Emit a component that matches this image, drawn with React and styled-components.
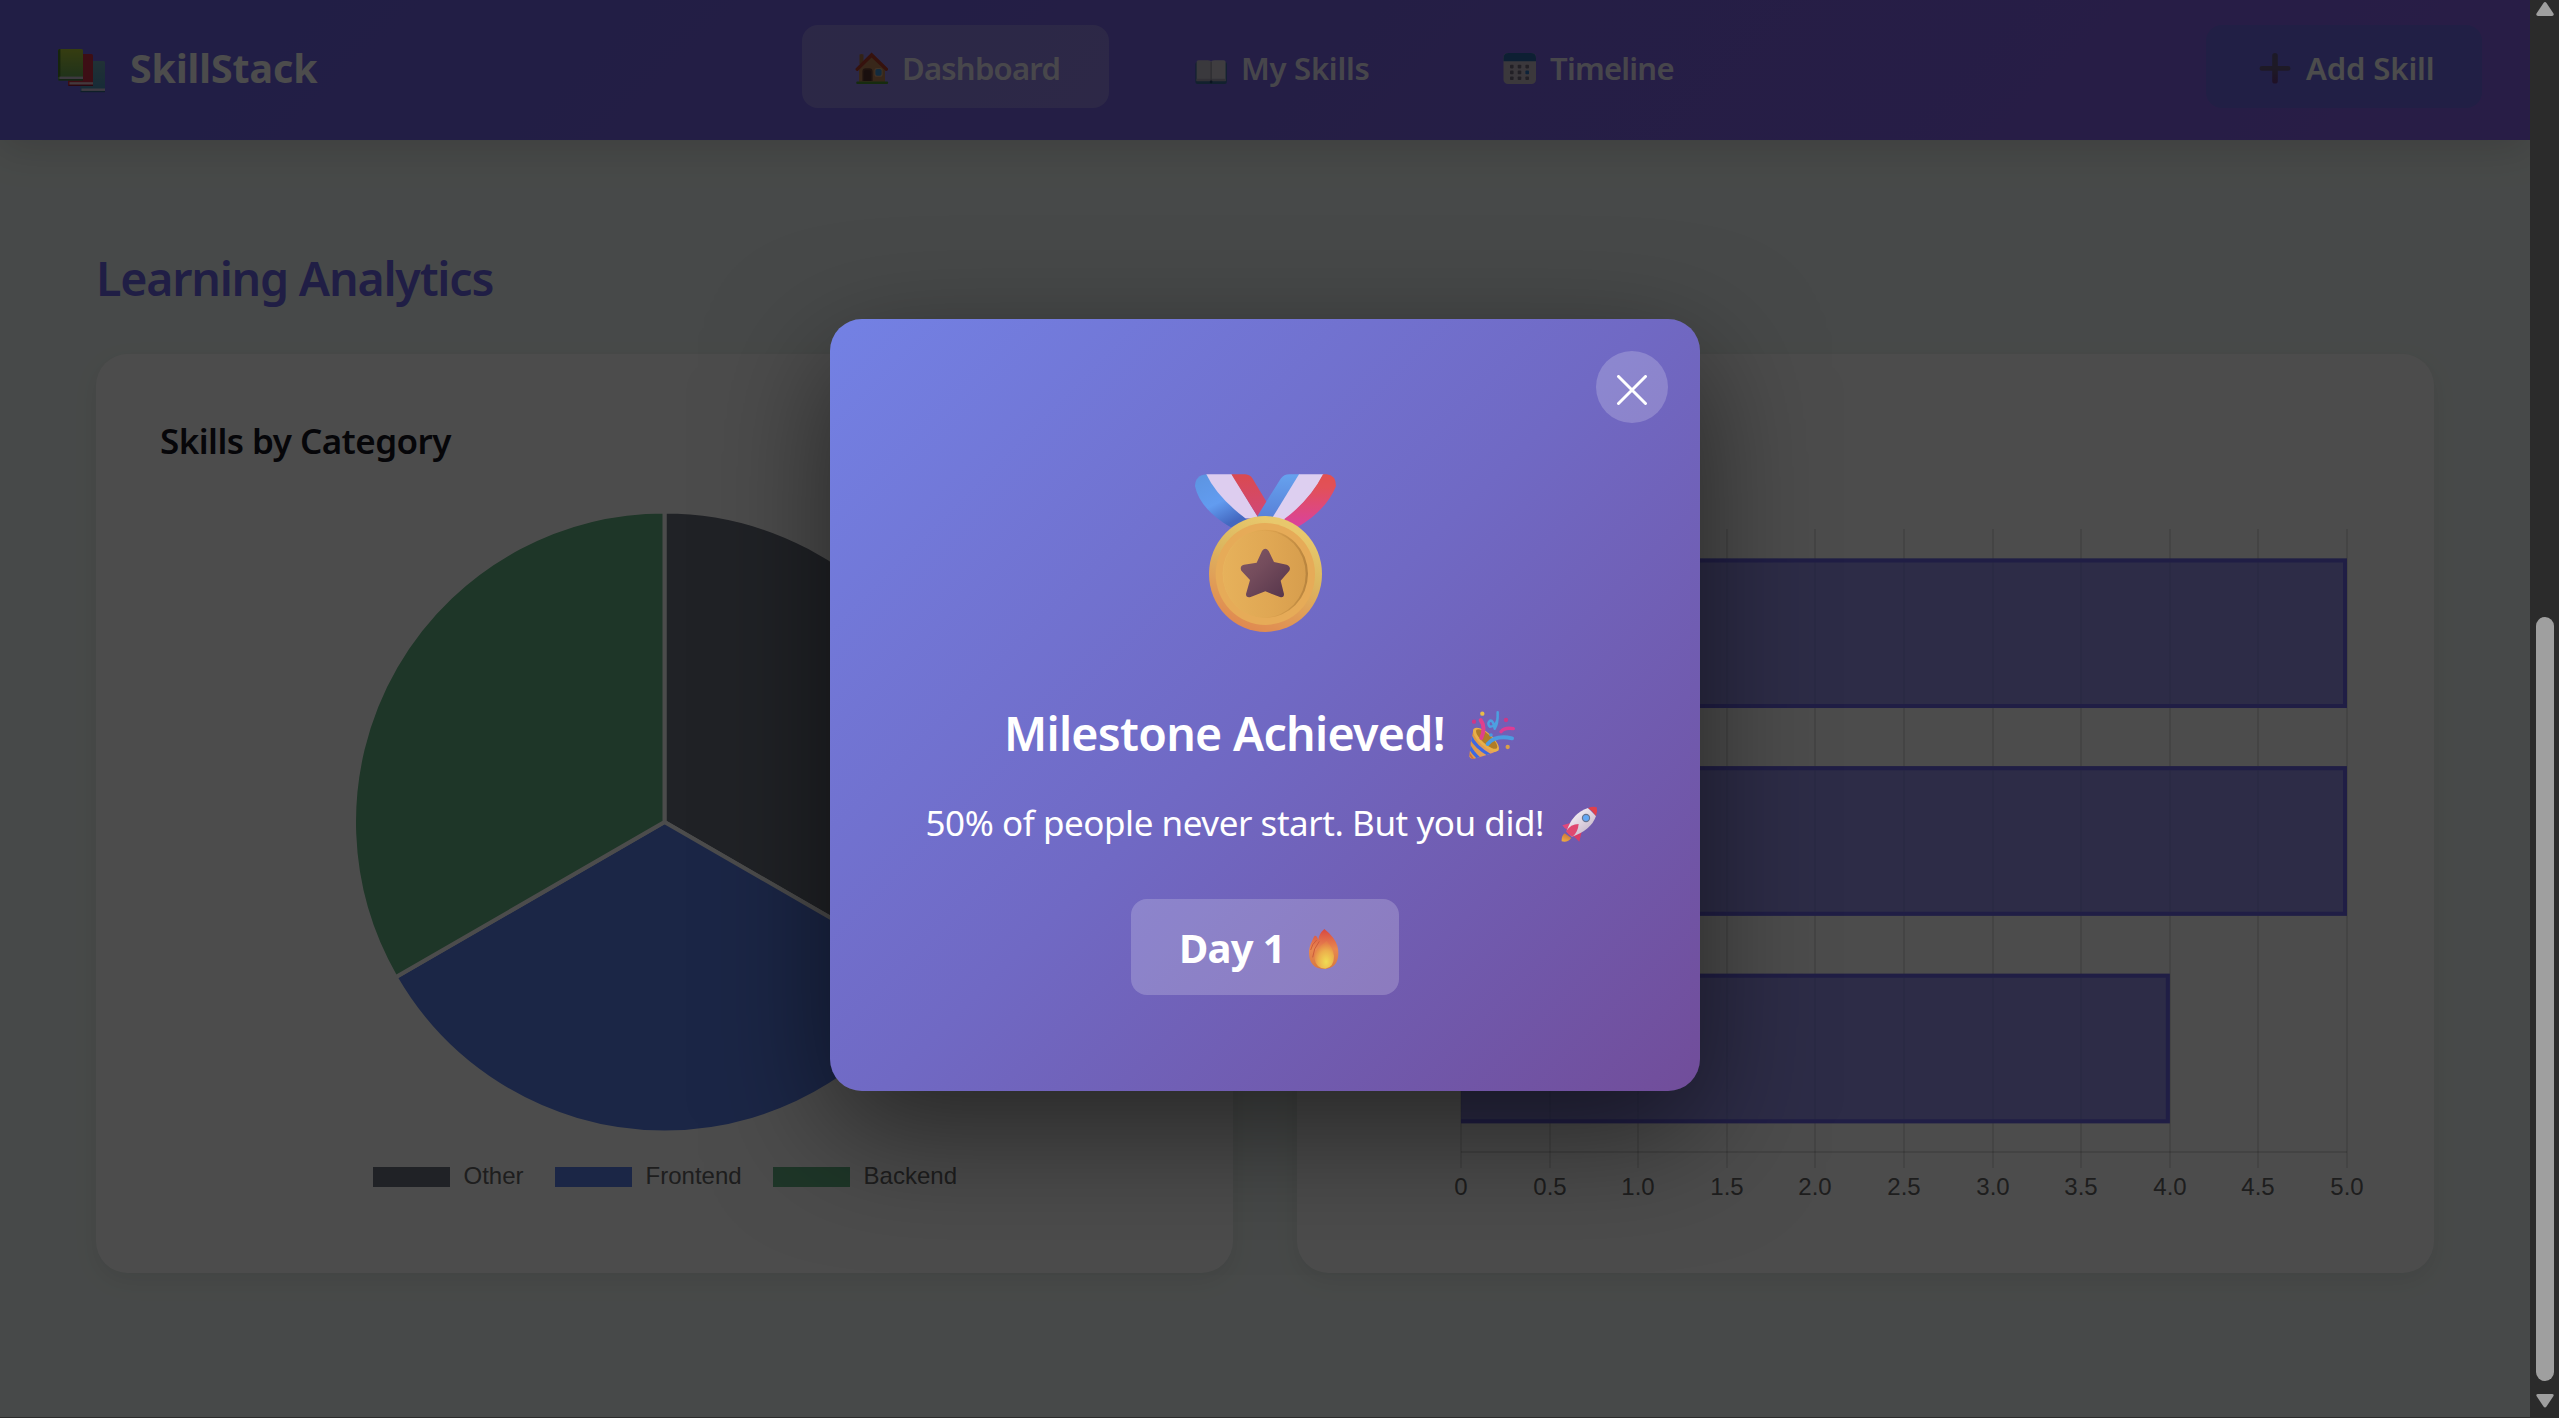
import React from 'react';
import styled, { createGlobalStyle } from 'styled-components';

const GlobalStyle = createGlobalStyle`
  * { box-sizing: border-box; }
  body {
    margin: 0;
    overflow: hidden;
    background: #2b2b2b;
    font-family: "Noto Sans", "Open Sans", sans-serif;
  }
  svg { display: block; flex-shrink: 0; }
`;

const Screen = styled.div`
  display: flex;
  width: 2559px;
  height: 1418px;
  background: #2b2b2b;
`;

const Page = styled.div`
  position: relative;
  width: 2530px;
  height: 1417px;
  overflow: hidden;
  background: #eff6f3;
`;

const Header = styled.header`
  position: relative;
  display: flex;
  justify-content: space-between;
  align-items: center;
  height: 140px;
  padding: 25px 48px 32px 56px;
  background: linear-gradient(135deg, #6e67e6 0%, #8762ea 100%);
  box-shadow: 0 8px 40px rgba(0, 0, 0, 0.15);
`;

const Brand = styled.div`
  display: flex;
  align-items: center;
  gap: 22px;
  width: 265px;
`;

const BrandName = styled.span`
  padding-top: 2px;
  font-size: 39.2px;
  font-weight: 700;
  line-height: 48px;
  color: #fff;
`;

const BrandIcon = styled.svg`
  margin-top: 8px;
`;

const Nav = styled.nav`
  display: flex;
  gap: 32px;
`;

const NavItem = styled.a`
  display: flex;
  align-items: center;
  gap: ${(p) => p.$gap || 11}px;
  width: ${(p) => p.$width}px;
  height: 83px;
  padding-left: 51px;
  border-radius: 16px;
  background: ${(p) => (p.$active ? 'rgba(255, 255, 255, 0.22)' : 'transparent')};
  color: rgba(255, 255, 255, 0.9);
`;

const NavLabel = styled.span`
  padding-top: 3px;
  font-size: 31px;
  font-weight: 600;
  line-height: 42px;
  letter-spacing: ${(p) => p.$tracking || 0}px;
  white-space: nowrap;
`;

const ItemIcon = styled.svg`
  width: 38px;
  height: 38px;
  margin-top: 5px;
`;

const AddButton = styled.button`
  display: flex;
  align-items: center;
  gap: 11px;
  width: 276px;
  height: 83px;
  padding: 0 0 0 51px;
  border: 0;
  border-radius: 16px;
  background: #6e6ae6;
  color: #fff;
  font-family: inherit;
`;

const Main = styled.main`
  display: flex;
  flex-direction: column;
  padding: 106px 96px 0;
`;

const SectionTitle = styled.h2`
  margin: 0 0 44px;
  font-size: 46.5px;
  font-weight: 600;
  line-height: 64px;
  letter-spacing: -1.2px;
  color: #6c65e6;
`;

const Cards = styled.div`
  display: grid;
  grid-template-columns: 1fr 1fr;
  gap: 64px;
`;

const Card = styled.section`
  display: flex;
  flex-direction: column;
  height: 919px;
  padding: 63px 64px 0;
  border-radius: 32px;
  background: #fff;
  box-shadow: 0 8px 24px rgba(0, 0, 0, 0.08);
`;

const CardTitle = styled.h3`
  height: 48px;
  margin: 0 0 25px;
  font-size: 35px;
  font-weight: 600;
  line-height: 48px;
  letter-spacing: -0.55px;
  color: #14141e;
`;

const Legend = styled.div`
  display: flex;
  justify-content: center;
  gap: 31.5px;
  margin-top: 13px;
  padding-left: 1px;
`;

const LegendItem = styled.div`
  display: flex;
  align-items: center;
  gap: 14px;
`;

const Swatch = styled.span`
  width: 76.5px;
  height: 20px;
  background: ${(p) => p.$color};
`;

const LegendLabel = styled.span`
  padding-bottom: 3px;
  font-family: "Liberation Sans", Arial, sans-serif;
  font-size: 24px;
  line-height: 25px;
  color: #666;
`;

const TickText = styled.text`
  font-family: "Liberation Sans", Arial, sans-serif;
  font-size: 24px;
  fill: #666;
  text-anchor: middle;
`;

const Overlay = styled.div`
  position: absolute;
  inset: 0;
  display: flex;
  justify-content: center;
  align-items: flex-start;
  padding-top: 319px;
  background: rgba(0, 0, 0, 0.7);
`;

const Modal = styled.div`
  position: relative;
  display: flex;
  flex-direction: column;
  align-items: center;
  width: 870px;
  height: 772px;
  padding-top: 131px;
  border-radius: 32px;
  background: linear-gradient(135deg, #7381e4 0%, #7069c4 50%, #714d9a 100%);
  box-shadow: 0 40px 120px rgba(0, 0, 0, 0.5);
  color: #fff;
`;

const CloseButton = styled.button`
  position: absolute;
  top: 32px;
  right: 32px;
  display: flex;
  justify-content: center;
  align-items: center;
  width: 72px;
  height: 72px;
  padding: 5px 0 0;
  border: 0;
  border-radius: 50%;
  background: rgba(255, 255, 255, 0.2);
`;

const ModalTitle = styled.h2`
  display: flex;
  justify-content: space-between;
  align-items: center;
  width: 522px;
  height: 64px;
  margin: 51px 0 0;
  font-size: 46.5px;
  font-weight: 600;
  line-height: 64px;
  letter-spacing: -0.72px;
  white-space: nowrap;
`;

const ModalText = styled.p`
  display: flex;
  justify-content: space-between;
  align-items: center;
  width: 679px;
  height: 48px;
  margin: 34px 0 0;
  font-size: 35px;
  line-height: 48px;
  letter-spacing: -0.45px;
  white-space: nowrap;
`;

const DayBadge = styled.div`
  display: flex;
  justify-content: space-between;
  align-items: center;
  width: 268px;
  height: 96px;
  margin-top: 52px;
  padding: 0 54px 0 48px;
  border-radius: 16px;
  background: rgba(255, 255, 255, 0.2);
  font-size: 40px;
  font-weight: 700;
  letter-spacing: -0.7px;
`;

const InlineEmoji = styled.svg`
  margin-top: 3px;
`;

const ScrollTrack = styled.div`
  display: flex;
  flex-direction: column;
  align-items: center;
  width: 29px;
  padding-left: 1px;
  background: #2b2b2b;
`;

const ScrollThumb = styled.div`
  width: 18px;
  height: 764px;
  margin: 601px 0 12px;
  border-radius: 9px;
  background: #9f9f9f;
`;

function BooksIcon() {
  return (
    <BrandIcon width="52" height="48" viewBox="56 47 52 48">
      <defs>
        <linearGradient id="bkG" x1="0" y1="0" x2="0" y2="1">
          <stop offset="0" stopColor="#b4cc38" />
          <stop offset="1" stopColor="#62a45c" />
        </linearGradient>
        <linearGradient id="bkB" x1="0" y1="0" x2="0" y2="1">
          <stop offset="0" stopColor="#6ea4b4" />
          <stop offset="1" stopColor="#4a90b8" />
        </linearGradient>
      </defs>
      <rect x="80.5" y="61" width="24.5" height="31" rx="1.5" fill="url(#bkB)" />
      <rect x="81.5" y="88.5" width="23.5" height="2.4" fill="#d4c4dc" />
      <rect x="80.5" y="91" width="24.5" height="1.2" fill="#35658a" />
      <rect x="68" y="54" width="25" height="32" rx="1.5" fill="#cc3048" />
      <rect x="69.5" y="82.2" width="23.5" height="2.4" fill="#e0c0cc" />
      <rect x="68.5" y="84.8" width="24.5" height="1.2" fill="#8c1c38" />
      <rect x="58" y="49" width="25" height="31.5" rx="1.5" fill="url(#bkG)" />
      <path d="M58 51a2 2 0 0 1 2.4-2V77H58z" fill="#4c7c28" />
      <rect x="59.5" y="76.6" width="23.5" height="2.4" fill="#ccc0d4" />
      <rect x="58.5" y="79.2" width="24.5" height="1.3" fill="#3c6c44" />
    </BrandIcon>
  );
}

function HouseIcon() {
  return (
    <ItemIcon viewBox="0 0 38 38">
      <path d="M6.5 4.6q2-1.2 4 0V14h-4z" fill="#a8744c" />
      <path d="M6 17 18.6 5 32 17v15H6z" fill="#bc8458" />
      <path d="M18.6 2.6 2.6 18.6q-.6 2.6 2.2 2.4L18.6 7.4 32.8 21q2.6.2 2.2-2.4z" fill="#b43c2c" />
      <path d="M9.4 31V21.5q0-3.2 3.4-3.2h3.4q3.4 0 3.4 3.2V31z" fill="#6b4438" />
      <path d="M10.8 31V22q0-2 2-2H15q3 0 3 2v9z" fill="#553430" />
      <rect x="21.4" y="18" width="8.2" height="8.8" rx="2.6" fill="#d8a880" />
      <rect x="22.4" y="19" width="6.2" height="6.8" rx="1.8" fill="#3f8fd0" />
      <rect x="3.2" y="31.6" width="32" height="2.4" rx="1.2" fill="#4b8f34" />
    </ItemIcon>
  );
}

function BookIcon() {
  return (
    <ItemIcon viewBox="0 0 38 38">
      <path d="M3.4 14q0-2 2-2h27.4q2 0 2 2v18q0 2-2 2H5.4q-2 0-2-2z" fill="#3c6f9c" />
      <path d="M4.6 12q0-1.8 2-1.8h9q3.5 0 3.5 2V31H4.6z" fill="#c4c0cc" />
      <path d="M33.6 12q0-1.8-2-1.8h-9q-3.5 0-3.5 2V31h14.5z" fill="#d2ced8" />
      <path d="M4.6 28.8h14.5v2.4H4.6zM19.1 28.8h14.5v2.4H19.1z" fill="#a8a0b4" />
      <path d="M19.1 12v19" stroke="#8c8898" strokeWidth="1" />
      <circle cx="19.1" cy="32" r="1.4" fill="#24446c" />
    </ItemIcon>
  );
}

const calendarRows = [14.8, 20.6, 26.4];
const calendarColumns = [7, 14.7, 22.4];

function CalendarIcon() {
  return (
    <ItemIcon viewBox="0 0 38 38">
      <rect x="0.5" y="3" width="32.5" height="31" rx="4.5" fill="#c6bcc8" />
      <path d="M0.5 11.2V8q0-5 5-5H28q5 0 5 5v3.2z" fill="#2c6aac" />
      {calendarRows.map((y, r) =>
        calendarColumns.map((x, c) => (
          <rect
            key={`${x}-${y}`}
            x={x}
            y={y}
            width="3.6"
            height="3.6"
            rx="0.8"
            fill={r === 1 && c === 2 ? '#2c74c0' : '#746c80'}
          />
        ))
      )}
    </ItemIcon>
  );
}

function PlusIcon() {
  return (
    <ItemIcon viewBox="0 0 38 38">
      <defs>
        <linearGradient id="plusFill" x1="0" y1="0" x2="0" y2="1">
          <stop offset="0" stopColor="#605684" />
          <stop offset="0.5" stopColor="#665880" />
          <stop offset="1" stopColor="#683882" />
        </linearGradient>
      </defs>
      <path
        d="M18 3q2.800 0 2.800 2.600V16H31q2.500 0 2.500 2.400t-2.500 2.400H20.800V31q0 2.600-2.800 2.600T15.200 31V20.800H5q-2.500 0-2.500-2.400T5 16h10.200V5.600Q15.200 3 18 3z"
        fill="url(#plusFill)"
      />
    </ItemIcon>
  );
}

function MedalIcon() {
  return (
    <svg width="170" height="200" viewBox="0 0 510 600">
      <defs>
        <linearGradient id="mdRim" x1="0.7" y1="0.1" x2="0.35" y2="1">
          <stop offset="0" stopColor="#e8c86c" />
          <stop offset="0.35" stopColor="#dcb860" />
          <stop offset="0.65" stopColor="#e0a058" />
          <stop offset="1" stopColor="#e08850" />
        </linearGradient>
        <linearGradient id="mdInner" x1="0" y1="0" x2="1" y2="0">
          <stop offset="0" stopColor="#e8b860" />
          <stop offset="0.55" stopColor="#dca24e" />
          <stop offset="1" stopColor="#b8843e" />
        </linearGradient>
        <linearGradient id="mdPlate" x1="0" y1="0" x2="1" y2="0">
          <stop offset="0" stopColor="#e6b05a" />
          <stop offset="1" stopColor="#dca250" />
        </linearGradient>
        <linearGradient id="mdBlue" x1="0" y1="0" x2="0.5" y2="1">
          <stop offset="0" stopColor="#5c94e0" />
          <stop offset="0.6" stopColor="#629cf0" />
          <stop offset="1" stopColor="#4468c0" />
        </linearGradient>
        <linearGradient id="mdBlue2" x1="0" y1="0" x2="0" y2="1">
          <stop offset="0" stopColor="#66a2ee" />
          <stop offset="1" stopColor="#5880d8" />
        </linearGradient>
        <linearGradient id="mdPink" x1="0" y1="0" x2="0" y2="1">
          <stop offset="0" stopColor="#e25050" />
          <stop offset="0.25" stopColor="#e25058" />
          <stop offset="1" stopColor="#da429e" />
        </linearGradient>
        <linearGradient id="mdRed" x1="0" y1="0" x2="0" y2="1">
          <stop offset="0" stopColor="#da4a50" />
          <stop offset="1" stopColor="#d04878" />
        </linearGradient>
        <linearGradient id="mdStar" x1="0" y1="0" x2="1" y2="1">
          <stop offset="0" stopColor="#805864" />
          <stop offset="0.4" stopColor="#744c5c" />
          <stop offset="1" stopColor="#54344a" />
        </linearGradient>
      </defs>
      <path d="M80 73Q46 76 45 108Q58 176 152 232L205 215Z" fill="url(#mdBlue)" />
      <path d="M79 73H156L236 205H196Q110 140 79 73z" fill="#ddcdef" />
      <path d="M154 73H196Q210 74 218 86L262 160L236 205Z" fill="url(#mdRed)" />
      <path d="M302 86Q312 73 328 73H360L278 205H230Q234 194 242 182Z" fill="url(#mdBlue2)" />
      <path d="M357 73H431Q390 150 314 210L276 205Z" fill="#ddcff0" />
      <path d="M429 73H440Q468 76 468 108Q440 180 352 232L312 208Q390 150 429 73z" fill="url(#mdPink)" />
      <ellipse cx="256.5" cy="372" rx="169.5" ry="174" fill="url(#mdRim)" />
      <ellipse cx="256" cy="372" rx="149" ry="153" fill="#e6ab58" />
      <ellipse cx="256" cy="371.5" rx="128" ry="132" fill="url(#mdInner)" />
      <ellipse cx="253" cy="372.5" rx="124" ry="130" fill="url(#mdPlate)" opacity="0.85" />
      <path
        d="M246 303Q256 290 266 303L282 336L320 344Q334 350 328 362L302 392L312 432Q312 444 300 441L256 424L212 441Q198 444 198 432L210 390L184 362Q178 348 192 344L230 338Z"
        fill="url(#mdStar)"
      />
    </svg>
  );
}

function PartyIcon() {
  return (
    <InlineEmoji width="60" height="56" viewBox="78 33 180 168">
      <defs>
        <linearGradient id="ptCone" x1="0" y1="0" x2="1" y2="0.6">
          <stop offset="0" stopColor="#d8943c" />
          <stop offset="1" stopColor="#e8a060" />
        </linearGradient>
        <clipPath id="ptClip">
          <path d="M101 98Q90 140 88 182Q92 190 102 188Q144 178 176 163Z" />
        </clipPath>
      </defs>
      <path d="M101 98Q90 140 88 182Q92 190 102 188Q144 178 176 163Z" fill="url(#ptCone)" />
      <g clipPath="url(#ptClip)" stroke="#3f68e0" strokeWidth="10" fill="none">
        <path d="M90 118Q104 152 150 178" />
        <path d="M84 142Q94 168 122 192" />
        <path d="M84 168L102 192" stroke="#d06c3c" strokeWidth="5" />
      </g>
      <ellipse cx="138" cy="131" rx="49" ry="20" transform="rotate(42 138 131)" fill="#e8b048" />
      <ellipse cx="140" cy="129" rx="41" ry="14" transform="rotate(42 140 129)" fill="#b07c28" />
      <path d="M122 72Q138 94 124 126" stroke="#e0408c" strokeWidth="12" strokeLinecap="round" fill="none" />
      <path d="M143 144Q166 116 216 127" stroke="#4c9ce0" strokeWidth="12" strokeLinecap="round" fill="none" />
      <path d="M183 107Q194 93 220 98" stroke="#dc3c94" strokeWidth="10" strokeLinecap="round" fill="none" />
      <path
        d="M173 49Q174 84 164 98Q160 72 150 74Q140 84 150 92Q166 92 172 72"
        stroke="#4ca0e0"
        strokeWidth="7.5"
        strokeLinecap="round"
        strokeLinejoin="round"
        fill="none"
      />
      <circle cx="127" cy="53" r="6.5" fill="#e8bc48" />
      <circle cx="102" cy="77" r="6.5" fill="#cc3888" />
      <circle cx="198" cy="72" r="6.5" fill="#cc3888" />
      <circle cx="153" cy="117" r="5.5" fill="#4898e0" />
      <circle cx="203" cy="153" r="6.5" fill="#dca048" />
    </InlineEmoji>
  );
}

function RocketIcon() {
  return (
    <InlineEmoji width="48" height="48" viewBox="351 315 144 144">
      <defs>
        <linearGradient id="rkBody" x1="0.2" y1="0.2" x2="0.8" y2="0.9">
          <stop offset="0" stopColor="#f4eef4" />
          <stop offset="1" stopColor="#c4b4c8" />
        </linearGradient>
        <linearGradient id="rkFlame" x1="0.7" y1="0" x2="0.2" y2="1">
          <stop offset="0" stopColor="#c8703c" />
          <stop offset="1" stopColor="#f0ac40" />
        </linearGradient>
      </defs>
      <path d="M374 412Q364 420 365 436Q384 440 394 426Z" fill="url(#rkFlame)" />
      <path d="M391 381L367 388Q372 396 380 400L382 412z" fill="#e0487c" />
      <path d="M396 416L418 437L424 412Q430 402 418 396z" fill="#d83c68" />
      <path d="M444 336Q396 352 380 406L396 422Q454 402 468 360Z" fill="url(#rkBody)" />
      <path d="M444 336Q460 330 470 334Q474 346 468 360Q458 344 444 336z" fill="#e0404c" />
      <path d="M378 406Q392 384 416 384Q414 408 398 422Q386 418 378 406z" fill="#e04870" />
      <circle cx="438" cy="366" r="12.5" fill="#687490" />
      <circle cx="438" cy="366" r="9" fill="#64a8f4" />
    </InlineEmoji>
  );
}

function FlameIcon() {
  return (
    <InlineEmoji width="42" height="46" viewBox="609 168 126 138">
      <defs>
        <linearGradient id="flOuter" x1="0.5" y1="0" x2="0.5" y2="1">
          <stop offset="0" stopColor="#d84840" />
          <stop offset="0.5" stopColor="#e88850" />
          <stop offset="1" stopColor="#d87840" />
        </linearGradient>
        <radialGradient id="flInner" cx="0.6" cy="0.75" r="0.7">
          <stop offset="0" stopColor="#f0dc54" />
          <stop offset="0.6" stopColor="#ecae4c" />
          <stop offset="1" stopColor="#e47c48" />
        </radialGradient>
      </defs>
      <path
        d="M673 177Q656 192 655 210Q651 196 644 197Q640 202 636 214Q626 232 627 252Q630 297 673 297Q714 294 715 252Q716 226 700 204Q690 190 673 177z"
        fill="url(#flOuter)"
      />
      <path d="M632 240Q636 222 650 210M638 262Q640 236 658 214" stroke="#cc5c3c" strokeWidth="3" fill="none" />
      <path d="M680 214Q642 236 643 264Q648 296 676 296Q702 292 702 258Q700 234 680 214z" fill="url(#flInner)" />
    </InlineEmoji>
  );
}

const categories = [
  { name: 'Other', color: '#6d727f' },
  { name: 'Frontend', color: '#5d80e9' },
  { name: 'Backend', color: '#67b485' },
];

const PIE = { cx: 504.5, cy: 332, r: 310.5 };

function slicePath(index) {
  const point = (deg) => {
    const a = ((deg - 90) * Math.PI) / 180;
    return `${PIE.cx + PIE.r * Math.cos(a)} ${PIE.cy + PIE.r * Math.sin(a)}`;
  };
  return `M${PIE.cx} ${PIE.cy}L${point(index * 120)}A${PIE.r} ${PIE.r} 0 0 1 ${point(index * 120 + 120)}Z`;
}

function PieChart() {
  return (
    <svg width="1009" height="660" viewBox="0 0 1009 660">
      {categories.map((c, i) => (
        <path key={c.name} d={slicePath(i)} fill={c.color} stroke="#fff" strokeWidth="4" strokeLinejoin="round" />
      ))}
    </svg>
  );
}

const ticks = ['0', '0.5', '1.0', '1.5', '2.0', '2.5', '3.0', '3.5', '4.0', '4.5', '5.0'];
const bars = [5, 5, 4];
const AXIS = { left: 100, step: 88.6, top: 39.5, row: 207.6, bar: 149.5 };

function BarChart() {
  return (
    <svg width="1009" height="720" viewBox="0 0 1009 720">
      {ticks.map((t, i) => {
        const x = Math.round(AXIS.left + i * AXIS.step);
        return (
          <g key={t}>
            <rect x={x - 1} y="39" width="2" height="639" fill="rgba(0,0,0,0.1)" />
            <TickText x={x} y="705">{t}</TickText>
          </g>
        );
      })}
      <rect x={AXIS.left} y="661" width="886" height="2" fill="rgba(0,0,0,0.12)" />
      {bars.map((v, i) => {
        const y = AXIS.top + AXIS.row * (i + 0.5) - AXIS.bar / 2;
        const w = v * 2 * AXIS.step;
        return (
          <g key={i}>
            <rect x={AXIS.left} y={y} width={w} height={AXIS.bar} fill="#6a66e6" fillOpacity="0.7" />
            <path
              d={`M${AXIS.left} ${y + 2}H${AXIS.left + w - 2}V${y + AXIS.bar - 2}H${AXIS.left}`}
              fill="none"
              stroke="#6b66e6"
              strokeWidth="4"
            />
          </g>
        );
      })}
    </svg>
  );
}

export default function App() {
  return (
    <Screen>
      <GlobalStyle />
      <Page>
        <Header>
          <Brand>
            <BooksIcon />
            <BrandName>SkillStack</BrandName>
          </Brand>
          <Nav>
            <NavItem $width={307} $active>
              <HouseIcon />
              <NavLabel $tracking={-0.75}>Dashboard</NavLabel>
            </NavItem>
            <NavItem $width={279}>
              <BookIcon />
              <NavLabel $tracking={-0.25}>My Skills</NavLabel>
            </NavItem>
            <NavItem $width={273} $gap={9}>
              <CalendarIcon />
              <NavLabel $tracking={-0.75}>Timeline</NavLabel>
            </NavItem>
          </Nav>
          <AddButton>
            <PlusIcon />
            <NavLabel $tracking={-0.1}>Add Skill</NavLabel>
          </AddButton>
        </Header>
        <Main>
          <SectionTitle>Learning Analytics</SectionTitle>
          <Cards>
            <Card>
              <CardTitle>Skills by Category</CardTitle>
              <PieChart />
              <Legend>
                {categories.map((c) => (
                  <LegendItem key={c.name}>
                    <Swatch $color={c.color} />
                    <LegendLabel>{c.name}</LegendLabel>
                  </LegendItem>
                ))}
              </Legend>
            </Card>
            <Card>
              <CardTitle />
              <BarChart />
            </Card>
          </Cards>
        </Main>
        <Overlay>
          <Modal>
            <CloseButton aria-label="Close">
              <svg width="32" height="30" viewBox="0 0 32 30">
                <path d="M2.5 1.5 29.5 28.5M29.5 1.5 2.5 28.5" stroke="#fff" strokeWidth="3" strokeLinecap="round" />
              </svg>
            </CloseButton>
            <MedalIcon />
            <ModalTitle>
              <span>Milestone Achieved!</span>
              <PartyIcon />
            </ModalTitle>
            <ModalText>
              <span>50% of people never start. But you did!</span>
              <RocketIcon />
            </ModalText>
            <DayBadge>
              <span>Day 1</span>
              <FlameIcon />
            </DayBadge>
          </Modal>
        </Overlay>
      </Page>
      <ScrollTrack>
        <svg width="18" height="16" viewBox="0 0 18 16">
          <path d="M7.5 3q1.5-1.8 3 0l7 10.5q.8 2.5-1.5 2.5H2q-2.3 0-1.5-2.5z" fill="#9f9f9f" />
        </svg>
        <ScrollThumb />
        <svg width="18" height="15" viewBox="0 0 18 15">
          <path d="M7.5 13.5q1.5 1.8 3 0l7-10.5Q18.3 1 16 1H2Q-.3 1 .5 3z" fill="#9f9f9f" />
        </svg>
      </ScrollTrack>
    </Screen>
  );
}
